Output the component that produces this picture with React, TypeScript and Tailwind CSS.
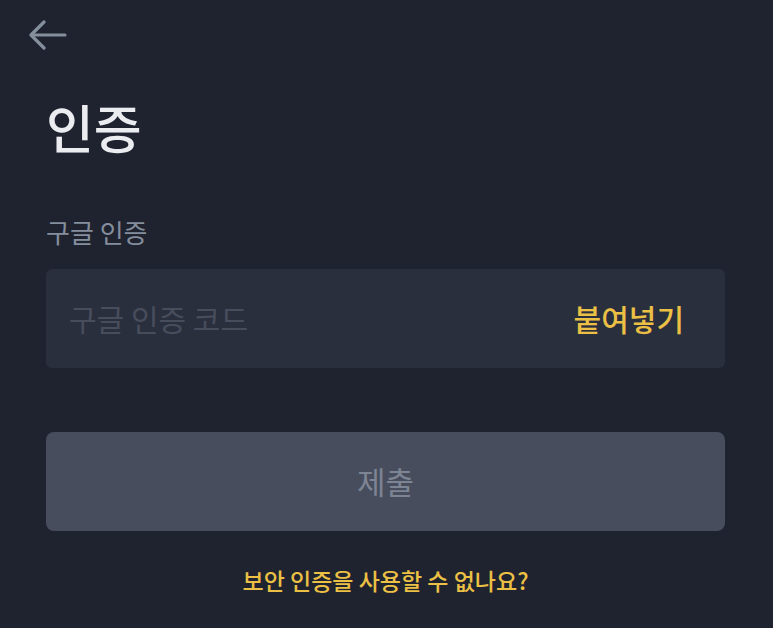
const BackArrow = () => (
  <svg width="38" height="30" viewBox="0 0 38 30" fill="none" stroke="#848e9c" strokeWidth="3.2" strokeLinecap="round" strokeLinejoin="round">
    <path d="M36 15H3" />
    <path d="M15 2L2 15l13 13" />
  </svg>
)

const App = () => {
  return (
    <div
      className="w-[773px] h-[628px] bg-[#1f2330] overflow-hidden flex flex-col"
      style={{ fontFamily: '"Noto Sans CJK KR", "Noto Sans", sans-serif' }}
    >
      <div className="pl-[29px] pt-[20px] h-[56px]">
        <BackArrow />
      </div>

      <div className="pl-[46px] pr-[48px] flex flex-col">
        <h1 className="mt-[38px] text-[52px] leading-[66px] font-medium text-[#eaecef]">인증</h1>

        <div className="mt-[55px] text-[26px] leading-[34px] text-[#848e9c]">구글 인증</div>

        <div className="mt-[20px] h-[99px] rounded-[6px] bg-[#2a2f3e] flex items-center justify-between pl-[23px] pr-[41px]">
          <span className="text-[30px] text-[#474d5c]">구글 인증 코드</span>
          <span className="text-[30px] font-medium text-[#ebc044]">붙여넣기</span>
        </div>

        <button className="mt-[64px] h-[99px] rounded-[8px] bg-[#474d5c] text-[31px] text-[#7d8494]">제출</button>

        <div className="mt-[32px] text-center text-[23px] font-medium text-[#ebc044]">보안 인증을 사용할 수 없나요?</div>
      </div>
    </div>
  )
}

export default App
